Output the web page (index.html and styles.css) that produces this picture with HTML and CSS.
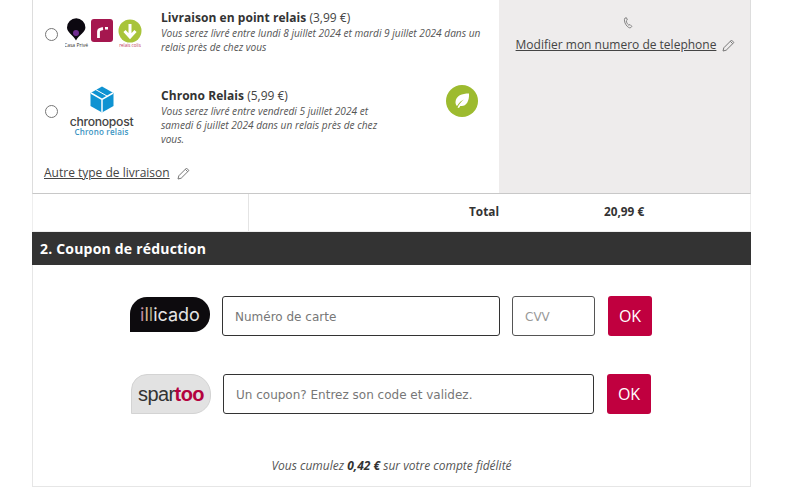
FILE: index.html
```html
<!DOCTYPE html>
<html lang="fr">
<head>
<meta charset="utf-8">
<title>Livraison</title>
<link rel="stylesheet" href="styles.css">
</head>
<body>
<main class="card">
  <section class="delivery">
    <div class="options">
      <div class="option option-one">
        <span class="radio"></span>
        <div class="logo">
          <svg width="82" height="42" viewBox="0 0 82 42">
            <path d="M11 26.500C8 21 2 18 2 13.500A9.200 9.200 0 0 1 20.400 13.500C20.400 18 14 21 11 26.500Z" fill="#0c0810"/>
            <circle cx="11" cy="19" r="3" fill="#6f2c8f"/>
            <text x="11" y="33" class="logo-tiny" text-anchor="middle" fill="#333">Casa Privé</text>
            <rect x="26" y="5" width="22" height="23" rx="3" fill="#a5174f"/>
            <path d="M33.500 24V17.500C33.500 15.500 35 15 38 14.500" stroke="#fff" stroke-width="2.800" fill="none"/>
            <rect x="40" y="13" width="3" height="2.500" fill="#fff"/>
            <circle cx="65" cy="17" r="11.500" fill="#a8c43a"/>
            <path d="M65 10V22.500M59.500 17L65 23L70.500 17" stroke="#fff" stroke-width="3" fill="none"/>
            <text x="65" y="33" class="logo-tiny logo-colis" text-anchor="middle" fill="#c0395e">relais colis</text>
          </svg>
        </div>
        <div class="info">
          <p class="title"><b>Livraison en point relais</b> (3,99 €)</p>
          <p class="desc">Vous serez livré entre lundi 8 juillet 2024 et mardi 9 juillet 2024 dans un relais près de chez vous</p>
        </div>
      </div>
      <div class="option option-two">
        <span class="radio"></span>
        <div class="logo logo-chrono">
          <svg class="cube" width="24" height="27" viewBox="0 0 24 26">
            <path d="M12 0L23.500 6.500V19.500L12 26L.5 19.500V6.500Z" fill="#0f93d2"/>
            <path d="M1 6.500L12 13L23 6.500M12 13V26" stroke="#fff" stroke-width="1.500" fill="none"/>
            <path d="M6 3.300L17.500 9.800" stroke="#fff" stroke-width="1" fill="none"/>
          </svg>
          <span class="chrono-name">chronopost</span>
          <span class="chrono-sub">Chrono relais</span>
        </div>
        <div class="info info-narrow">
          <p class="title"><b>Chrono Relais</b> (5,99 €)</p>
          <p class="desc">Vous serez livré entre vendredi 5 juillet 2024 et samedi 6 juillet 2024 dans un relais près de chez vous.</p>
        </div>
        <span class="leaf">
          <svg width="18" height="18" viewBox="0 0 18 18">
            <path d="M16 1.500C9 1.500 3 3.500 2.500 10C2.400 11.500 3 13 4 14C6 10.500 8.500 8.500 11 7.500C8.500 9.500 6 12 4.500 15.500L6 16C6.500 15 6.800 14.600 7.300 13.900C12.500 15 16.500 10 16 1.500Z" fill="#fff"/>
          </svg>
        </span>
      </div>
      <div class="edit-line">
        <a class="link">Autre type de livraison</a>
        <svg class="pencil" width="13" height="13" viewBox="0 0 13 13"><path d="M1 12L1.800 8.800L9.500 1.100L11.900 3.500L4.200 11.200ZM8.300 2.300L10.700 4.700" fill="none" stroke="#777" stroke-width="1"/></svg>
      </div>
    </div>
    <aside class="contact">
      <svg class="phone" width="10" height="12" viewBox="0 0 10 12"><path d="M2 1L3.500 .8L4.300 3L3.200 4C3.500 5.500 4.500 7.200 5.800 8.200L7 7.500L8.800 9.300L7.800 10.600C6.500 11.500 4.500 10 3 7.800C1.500 5.500 .8 2.500 2 1Z" fill="none" stroke="#777" stroke-width=".9"/></svg>
      <div class="contact-line">
        <a class="link">Modifier mon numero de telephone</a>
        <svg class="pencil" width="13" height="13" viewBox="0 0 13 13"><path d="M1 12L1.800 8.800L9.500 1.100L11.900 3.500L4.200 11.200ZM8.300 2.300L10.700 4.700" fill="none" stroke="#777" stroke-width="1"/></svg>
      </div>
    </aside>
  </section>
  <section class="total-row">
    <div class="total-spacer"></div>
    <div class="total-cell">
      <span class="total-label">Total</span>
      <span class="total-value">20,99 €</span>
    </div>
  </section>
  <h2 class="heading">2. Coupon de réduction</h2>
  <section class="coupons">
    <div class="coupon-row row-illicado">
      <span class="badge badge-illicado"><i class="ill-a">i</i><i class="ill-b">l</i><i class="ill-c">l</i><i class="ill-d">i</i>cado</span>
      <input class="field field-card" placeholder="Numéro de carte">
      <input class="field field-cvv" placeholder="CVV">
      <button class="ok">OK</button>
    </div>
    <div class="coupon-row row-spartoo">
      <span class="badge badge-spartoo">spar<b>too</b></span>
      <input class="field field-code" placeholder="Un coupon? Entrez son code et validez.">
      <button class="ok">OK</button>
    </div>
    <p class="fidelity">Vous cumulez <b>0,42 €</b> sur votre compte fidélité</p>
  </section>
</main>
</body>
</html>
```
FILE: styles.css
```css
* { box-sizing: border-box; }
html, body { margin: 0; height: 503px; overflow: hidden; background: #fff; }
body { padding: 0 34px 0 32px; font-family: "Open Sans", sans-serif; color: #333; }
p { margin: 0; }
.card { width: 719px; }
.delivery { display: flex; height: 194px; border: 1px solid #ddd; border-width: 0 1px 1px; border-bottom-color: #c8c8c8; }
.options { width: 466px; display: flex; flex-direction: column; }
.option { display: flex; position: relative; }
.option-one { height: 77px; padding-top: 10px; }
.option-two { height: 78px; padding-top: 11px; }
.radio { width: 13px; height: 13px; border: 1px solid #767676; border-radius: 50%; background: #fff; flex: none; margin: 18px 0 0 12px; }
.option-two .radio { margin-top: 17px; }
.logo { width: 103px; flex: none; padding: 0 0 0 7px; }
.logo svg { display: block; margin-top: 4px; }
.logo-tiny { font: 5px "Open Sans", sans-serif; }
.logo-colis { font-size: 4.500px; }
.logo-chrono { display: flex; flex-direction: column; align-items: center; padding: 0 16px 0 0; }
.logo-chrono .cube { margin-top: -2px; }
.chrono-name { font: 500 12.200px/12px "Inter", sans-serif; color: #444; letter-spacing: -.3px; margin-top: 3px; }
.chrono-sub { font: 600 8px/8px "Open Sans", sans-serif; color: #3a94c2; letter-spacing: .2px; }
.info { width: 325px; }
.info-narrow { width: 225px; }
.title { font-size: 12px; line-height: 15px; color: #444; }
.title b { font-weight: 700; color: #333; letter-spacing: .05px; }
.desc { font-size: 10.130px; line-height: 14px; font-style: italic; color: #555; margin-top: 1px; }
.leaf { position: absolute; left: 413px; top: 8px; width: 32px; height: 32px; border-radius: 50%; background: #9dbb2f; display: flex; align-items: center; justify-content: center; }
.edit-line { display: flex; align-items: center; gap: 7px; padding: 10px 0 0 11px; }
.link { font-size: 12px; line-height: 16px; color: #444; text-decoration: underline; }
.pencil { flex: none; }
.contact { flex: 1; background: #eeecec; display: flex; flex-direction: column; align-items: center; padding: 17px 0 0 2px; }
.phone { display: block; margin-left: 4px; }
.contact-line { display: flex; align-items: center; gap: 6px; margin-top: 8px; }
.total-row { display: flex; height: 38px; border: 1px solid #eee; border-width: 0 1px 1px; }
.total-spacer { width: 216px; border-right: 1px solid #e4e4e4; }
.total-cell { flex: 1; display: flex; align-items: center; font-size: 11.800px; font-weight: 700; color: #333; padding-bottom: 4px; }
.total-label { margin-left: 220px; width: 135px; }
.heading { margin: 0; height: 33px; background: #333; color: #fff; font-size: 14px; font-weight: 700; line-height: 33px; padding-left: 8px; letter-spacing: .2px; }
.coupons { height: 222px; border: 1px solid #e6e6e6; border-top: 0; }
.coupon-row { display: flex; align-items: center; }
.row-illicado { padding: 31px 0 0 97px; }
.row-spartoo { padding: 38px 0 0 98px; }
.badge { flex: none; display: flex; align-items: center; justify-content: center; font-family: "Liberation Sans", sans-serif; }
.badge-illicado { width: 80px; height: 35px; margin-top: -4px; border-radius: 17px 17px 17px 0; background: #0d0b0e; color: #e4e4e4; font: 400 18px "Inter", sans-serif; }
.badge-illicado i { font-style: normal; }
.ill-a { color: #c08aa0; }
.ill-b { color: #d4b88a; }
.ill-c { color: #a8a488; }
.ill-d { color: #e6e6e6; }
.badge-spartoo { width: 80px; height: 40px; border-radius: 16px 20px 18px 0; background: #e2e2e2; border: 1px solid #d3d3d3; color: #333; font-size: 20px; letter-spacing: -.6px; }
.badge-spartoo b { color: #b4023f; }
.field { height: 40px; border: 1px solid #333; border-radius: 3px; background: #fff; font: 12px "DejaVu Sans", sans-serif; padding: 2px 12px 0; }
.field::placeholder { color: #777; opacity: 1; }
.field-card { width: 278px; margin-left: 12px; }
.field-cvv { width: 83px; margin-left: 12px; border-color: #555; }
.field-cvv::placeholder { color: #999; }
.field-code { width: 371px; margin-left: 12px; }
.ok { width: 44px; height: 40px; margin-left: 13px; border: 0; border-radius: 3px; background: #c0003f; color: #fff; font: 16px "Open Sans", sans-serif; padding: 0; }
.fidelity { text-align: center; font-size: 12px; font-style: italic; line-height: 14px; color: #555; margin-top: 45px; }
.fidelity b { color: #333; }
```
